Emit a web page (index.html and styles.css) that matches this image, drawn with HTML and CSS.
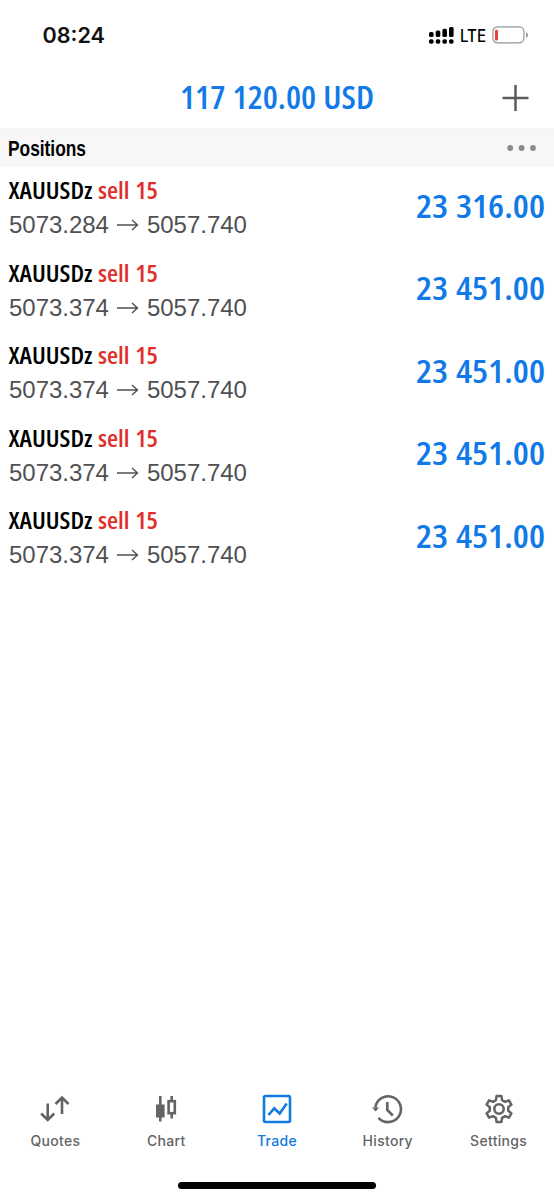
FILE: index.html
```html
<!DOCTYPE html>
<html lang="en">
<head>
<meta charset="utf-8">
<title>Trade</title>
<link rel="stylesheet" href="styles.css">
</head>
<body>
<div class="screen">
  <header class="status">
    <svg class="clock" width="64" height="24"><text x="-.5" y="18" textLength="62.5" lengthAdjust="spacingAndGlyphs">08:24</text></svg>
    <div class="status-right">
      <svg width="26" height="18" viewBox="0 0 26 18"><g fill="#000"><rect x="0" y="6" width="4.6" height="5" rx="1.6"/><rect x="6.7" y="4.5" width="4.6" height="6.5" rx="1.6"/><rect x="13.4" y="2.8" width="4.6" height="8.2" rx="1.6"/><rect x="20" y="1" width="4.6" height="10" rx="1.6"/><rect x="0" y="13.2" width="4.6" height="4.5" rx="1.8"/><rect x="6.7" y="13.2" width="4.6" height="4.5" rx="1.8"/><rect x="13.4" y="13.2" width="4.6" height="4.5" rx="1.8"/><rect x="20" y="13.2" width="4.6" height="4.5" rx="1.8"/></g></svg>
      <svg class="lte" width="27" height="18"><text x="0" y="15.5" textLength="26" lengthAdjust="spacingAndGlyphs">LTE</text></svg>
      <svg class="battery" width="37" height="18" viewBox="0 0 37 18"><rect x=".9" y=".9" width="31" height="16" rx="4.7" fill="none" stroke="#969696" stroke-width="1.2"/><rect x="3" y="3.8" width="3" height="10.6" rx="1.2" fill="#e8403a"/><path d="M34 6.3Q36 7 36 9T34 11.7Z" fill="#969696"/></svg>
    </div>
  </header>
  <div class="title">
    <svg class="cond" width="194" height="46"><text x="-1" y="34" textLength="194" lengthAdjust="spacingAndGlyphs">117 120.00 USD</text></svg>
    <svg class="plus" width="28" height="28" viewBox="0 0 28 28"><path d="M14.5 1V27M1.5 14H27.5" stroke="#5c5c5e" stroke-width="2.5"/></svg>
  </div>
  <div class="section">
    <svg class="section-name" width="80" height="26"><text x="-1" y="20.5" textLength="78" lengthAdjust="spacingAndGlyphs">Positions</text></svg>
    <svg width="30" height="8"><g fill="#8b8b8d"><circle cx="3.2" cy="4" r="2.9"/><circle cx="14.6" cy="4" r="2.9"/><circle cx="26" cy="4" r="2.9"/></g></svg>
  </div>
  <main>
    <div class="row"><div>
      <div class="symbol"><svg width="84" height="30"><text x="-.5" y="24" textLength="84" lengthAdjust="spacingAndGlyphs">XAUUSDz</text></svg><svg class="sell" width="60" height="30"><text x="0" y="24" textLength="60" lengthAdjust="spacingAndGlyphs">sell 15</text></svg></div>
      <div class="prices"><span>5073.284</span><svg width="22" height="14"><path d="M0 7H20M15 2L20.5 7L15 12"/></svg><span>5057.740</span></div></div>
      <svg class="cond" width="129" height="46"><text x="0" y="34" textLength="129" lengthAdjust="spacingAndGlyphs">23 316.00</text></svg></div>
    <div class="row"><div>
      <div class="symbol"><svg width="84" height="30"><text x="-.5" y="24" textLength="84" lengthAdjust="spacingAndGlyphs">XAUUSDz</text></svg><svg class="sell" width="60" height="30"><text x="0" y="24" textLength="60" lengthAdjust="spacingAndGlyphs">sell 15</text></svg></div>
      <div class="prices"><span>5073.374</span><svg width="22" height="14"><path d="M0 7H20M15 2L20.5 7L15 12"/></svg><span>5057.740</span></div></div>
      <svg class="cond" width="129" height="46"><text x="0" y="34" textLength="129" lengthAdjust="spacingAndGlyphs">23 451.00</text></svg></div>
    <div class="row"><div>
      <div class="symbol"><svg width="84" height="30"><text x="-.5" y="24" textLength="84" lengthAdjust="spacingAndGlyphs">XAUUSDz</text></svg><svg class="sell" width="60" height="30"><text x="0" y="24" textLength="60" lengthAdjust="spacingAndGlyphs">sell 15</text></svg></div>
      <div class="prices"><span>5073.374</span><svg width="22" height="14"><path d="M0 7H20M15 2L20.5 7L15 12"/></svg><span>5057.740</span></div></div>
      <svg class="cond" width="129" height="46"><text x="0" y="34" textLength="129" lengthAdjust="spacingAndGlyphs">23 451.00</text></svg></div>
    <div class="row"><div>
      <div class="symbol"><svg width="84" height="30"><text x="-.5" y="24" textLength="84" lengthAdjust="spacingAndGlyphs">XAUUSDz</text></svg><svg class="sell" width="60" height="30"><text x="0" y="24" textLength="60" lengthAdjust="spacingAndGlyphs">sell 15</text></svg></div>
      <div class="prices"><span>5073.374</span><svg width="22" height="14"><path d="M0 7H20M15 2L20.5 7L15 12"/></svg><span>5057.740</span></div></div>
      <svg class="cond" width="129" height="46"><text x="0" y="34" textLength="129" lengthAdjust="spacingAndGlyphs">23 451.00</text></svg></div>
    <div class="row"><div>
      <div class="symbol"><svg width="84" height="30"><text x="-.5" y="24" textLength="84" lengthAdjust="spacingAndGlyphs">XAUUSDz</text></svg><svg class="sell" width="60" height="30"><text x="0" y="24" textLength="60" lengthAdjust="spacingAndGlyphs">sell 15</text></svg></div>
      <div class="prices"><span>5073.374</span><svg width="22" height="14"><path d="M0 7H20M15 2L20.5 7L15 12"/></svg><span>5057.740</span></div></div>
      <svg class="cond" width="129" height="46"><text x="0" y="34" textLength="129" lengthAdjust="spacingAndGlyphs">23 451.00</text></svg></div>
  </main>
  <nav class="tabs">
    <a class="tab"><svg width="32" height="32" viewBox="0 0 32 32"><path d="M8.7 10.5V27M2.2 20.5L8.7 27L15.2 20.5M23 21V4.5M16.5 11L23 4.5L29.5 11"/></svg><span>Quotes</span></a>
    <a class="tab"><svg width="32" height="32" viewBox="0 0 32 32"><path d="M10.3 3V28.5M21.7 3V7M21.7 21V25.5"/><rect x="6" y="11.5" width="8.6" height="13" fill="currentColor" stroke="none"/><rect x="18.6" y="8.2" width="6.2" height="12" /></svg><span>Chart</span></a>
    <a class="tab active"><svg width="32" height="32" viewBox="0 0 32 32"><rect x="3" y="3" width="26" height="26" rx="1.5"/><path d="M7.5 22L13.2 15.3L18.7 20.5L25.7 10.5"/></svg><span>Trade</span></a>
    <a class="tab"><svg width="32" height="32" viewBox="0 0 32 32"><path d="M3.3 14.5A12.9 12.9 0 1 1 6.5 24.8M15.3 9V17L20.8 22.5"/><path d="M0 14.5H7L3.7 18.5Z" fill="currentColor" stroke="none"/></svg><span>History</span></a>
    <a class="tab"><svg width="32" height="32" viewBox="0 0 32 32"><path stroke-width="2.5" stroke-linejoin="round" d="M13.6 3H18.4L19.1 7.1L22 8.8L25.9 7.3L28.4 11.6L25.2 14.2V17.8L28.4 20.4L25.9 24.7L22 23.2L19.1 24.9L18.4 29H13.6L12.9 24.9L10 23.2L6.1 24.7L3.6 20.4L6.8 17.8V14.2L3.6 11.6L6.1 7.3L10 8.8L12.9 7.1Z"/><circle cx="16" cy="16" r="4.7"/></svg><span>Settings</span></a>
  </nav>
  <div class="home"></div>
</div>
</body>
</html>
```
FILE: styles.css
```css
* { box-sizing: border-box; }
body { margin: 0; background: #fff; }
svg { display: block; flex: none; overflow: visible; }
.screen { width: 554px; height: 1200px; display: flex; flex-direction: column; font-family: Inter, sans-serif; }
.status { height: 67px; padding: 25px 25px 0 43px; display: flex; justify-content: space-between; align-items: flex-start; }
.clock { font-size: 21.5px; font-weight: 580; fill: #111; }
.status-right { display: flex; align-items: center; padding-top: 1px; }
.lte { margin-left: 5px; font-size: 17px; font-weight: 500; }
.battery { margin-left: 5px; }
.title { height: 62px; padding: 0 25px 0 181px; display: flex; align-items: center; justify-content: space-between; border-bottom: 1px solid #f5f5f5; }
.cond { font-family: "Open Sans", sans-serif; font-size: 32px; font-weight: 620; font-stretch: 80%; word-spacing: 1px; fill: #117ae8; }
.section { height: 38px; padding: 0 17px 0 9px; background: #f7f7f7; display: flex; align-items: center; justify-content: space-between; }
.section-name { font-family: "Liberation Sans", sans-serif; font-size: 22px; font-weight: 700; }
.row { height: 82.5px; padding: 8px 9px 0; display: flex; justify-content: space-between; }
.row .cond { margin-top: 8.5px; }
.symbol { display: flex; gap: 5px; font-family: "Open Sans", sans-serif; font-size: 23px; font-weight: 640; font-stretch: 78%; word-spacing: 1px; }
.sell { fill: #e02f2b; font-weight: 580; }
.prices { display: flex; align-items: center; gap: 8px; height: 40px; font: 24px/40px "Liberation Sans", sans-serif; color: #505052; letter-spacing: -.02px; }
.prices svg { stroke: #505052; stroke-width: 1.4; fill: none; }
.tabs { margin-top: auto; height: 74px; display: grid; grid-template-columns: repeat(5, 1fr); }
.tab { display: flex; flex-direction: column; align-items: center; color: #646466; font-size: 14px; font-weight: 450; letter-spacing: .3px; line-height: 20px; }
.tab span { margin-top: 6px; }
.tab svg { fill: none; stroke: currentColor; stroke-width: 2.6; }
.active { color: #117ae0; font-weight: 500; }
.home { width: 198px; height: 7px; border-radius: 4px; background: #000; margin: 14.5px auto 11.5px; }
```
